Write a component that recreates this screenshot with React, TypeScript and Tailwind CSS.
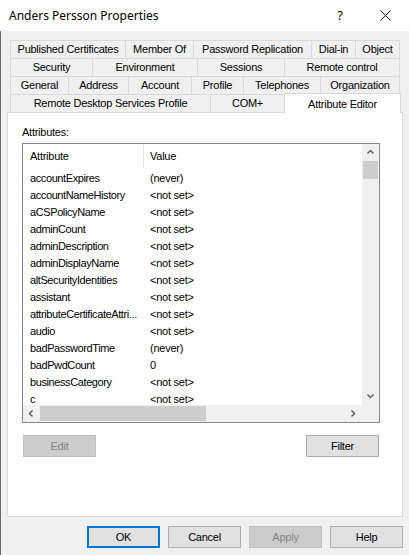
import React from "react";

const tabRows: { label: string; w: number }[][] = [
  [
    { label: "Published Certificates", w: 115 },
    { label: "Member Of", w: 68 },
    { label: "Password Replication", w: 118 },
    { label: "Dial-in", w: 44 },
    { label: "Object", w: 45 },
  ],
  [
    { label: "Security", w: 82 },
    { label: "Environment", w: 105 },
    { label: "Sessions", w: 87 },
    { label: "Remote control", w: 116 },
  ],
  [
    { label: "General", w: 58 },
    { label: "Address", w: 60 },
    { label: "Account", w: 63 },
    { label: "Profile", w: 52 },
    { label: "Telephones", w: 77 },
    { label: "Organization", w: 80 },
  ],
];

const rows = [
  ["accountExpires", "(never)"],
  ["accountNameHistory", "<not set>"],
  ["aCSPolicyName", "<not set>"],
  ["adminCount", "<not set>"],
  ["adminDescription", "<not set>"],
  ["adminDisplayName", "<not set>"],
  ["altSecurityIdentities", "<not set>"],
  ["assistant", "<not set>"],
  ["attributeCertificateAttri...", "<not set>"],
  ["audio", "<not set>"],
  ["badPasswordTime", "(never)"],
  ["badPwdCount", "0"],
  ["businessCategory", "<not set>"],
  ["c", "<not set>"],
];

function Chevron({ dir }: { dir: "up" | "down" | "left" | "right" }) {
  const d = {
    up: "M1.5 5.5 L4.5 2.5 L7.5 5.5",
    down: "M1.5 2.5 L4.5 5.5 L7.5 2.5",
    left: "M5.5 1.5 L2.5 4.5 L5.5 7.5",
    right: "M2.5 1.5 L5.5 4.5 L2.5 7.5",
  }[dir];
  return (
    <svg width="9" height="9" viewBox="0 0 9 9">
      <path d={d} fill="none" stroke="#606060" strokeWidth="1.5" />
    </svg>
  );
}

function Btn({ label, disabled, focus }: { label: string; disabled?: boolean; focus?: boolean }) {
  if (disabled)
    return (
      <div className="w-[73px] h-[22px] flex items-center justify-center bg-[#cccccc] border border-[#bfbfbf] text-[#838383]">
        {label}
      </div>
    );
  return (
    <div
      className={
        focus
          ? "w-[73px] h-[22px] flex items-center justify-center bg-[#e1e1e1] border-2 border-[#0078d7] text-black"
          : "w-[73px] h-[22px] flex items-center justify-center bg-[#e1e1e1] border border-[#adadad] text-black"
      }
    >
      {label}
    </div>
  );
}

export default function App() {
  return (
    <div className="w-[409px] h-[555px] bg-[#f0f0f0] flex flex-col overflow-hidden font-['Liberation_Sans',Arial,sans-serif] text-[11px] tracking-[-0.25px] text-black">
      {/* Title bar */}
      <div className="h-[31px] bg-white flex items-center shrink-0 font-['Noto_Sans',sans-serif] text-[12px] tracking-normal">
        <span className="pl-[9px] flex-1">Anders Persson Properties</span>
        <span className="w-[20px] text-center text-[13px] mr-[30px]">?</span>
        <svg width="11" height="11" viewBox="0 0 11 11" className="mr-[18px]">
          <path d="M0.5 0.5 L10.5 10.5 M10.5 0.5 L0.5 10.5" stroke="#111" strokeWidth="1" />
        </svg>
      </div>

      <div className="flex-1 flex flex-col border-l border-[#6a6a6a]">
        {/* Tabs */}
        <div className="mt-[9px] pl-[9px] flex flex-col">
          {tabRows.map((row, i) => (
            <div key={i} className="flex h-[18px]">
              {row.map((t, j) => (
                <div
                  key={t.label}
                  style={{ width: t.w }}
                  className={
                    j === row.length - 1
                      ? "h-full flex items-center justify-center border-l border-t border-r border-[#d9d9d9] bg-[#f0f0f0]"
                      : "h-full flex items-center justify-center border-l border-t border-[#d9d9d9] bg-[#f0f0f0]"
                  }
                >
                  {t.label}
                </div>
              ))}
            </div>
          ))}
          <div className="flex h-[18px] items-end">
            <div className="w-[200px] h-[18px] flex items-center justify-center border-l border-t border-[#d9d9d9]">
              Remote Desktop Services Profile
            </div>
            <div className="w-[74px] h-[18px] flex items-center justify-center border-l border-t border-[#d9d9d9]">
              COM+
            </div>
            <div className="w-[117px] h-[20px] -mb-px relative z-10 bg-white flex items-start pt-[2px] justify-center border-l border-t border-r border-[#d9d9d9]">
              Attribute Editor
            </div>
          </div>
        </div>

        {/* Panel */}
        <div className="ml-[6px] w-[396px] h-[405px] bg-white border border-[#d9d9d9] flex flex-col">
          <div className="pl-[14px] pt-[11px] h-[30px]">Attributes:</div>

          {/* List box */}
          <div className="ml-[14px] w-[358px] h-[280px] border border-[#828790] flex flex-col">
            <div className="flex flex-1 min-h-0">
              <div className="flex-1 flex flex-col overflow-hidden">
                <div className="h-[25px] flex items-center shrink-0">
                  <div className="w-[121px] pl-[7px] h-[23px] flex items-center border-r border-[#e5e5e5]">Attribute</div>
                  <div className="pl-[6px]">Value</div>
                </div>
                {rows.map(([a, v]) => (
                  <div key={a} className="h-[17px] pt-px flex items-center shrink-0">
                    <div className="w-[121px] pl-[7px] whitespace-nowrap tracking-[-0.4px]">{a}</div>
                    <div className="pl-[6px]">{v}</div>
                  </div>
                ))}
              </div>
              <div className="w-[17px] bg-[#f0f0f0] flex flex-col">
                <div className="h-[17px] flex items-center justify-center">
                  <Chevron dir="up" />
                </div>
                <div className="h-[18px] mx-px bg-[#cdcdcd]" />
                <div className="flex-1" />
                <div className="h-[17px] flex items-center justify-center">
                  <Chevron dir="down" />
                </div>
              </div>
            </div>
            <div className="h-[17px] flex bg-[#f0f0f0] shrink-0">
              <div className="w-[17px] flex items-center justify-center">
                <Chevron dir="left" />
              </div>
              <div className="w-[166px] my-px bg-[#cdcdcd]" />
              <div className="flex-1" />
              <div className="w-[17px] flex items-center justify-center">
                <Chevron dir="right" />
              </div>
              <div className="w-[17px]" />
            </div>
          </div>

          <div className="mt-[12px] ml-[15px] mr-[23px] flex justify-between">
            <Btn label="Edit" disabled />
            <Btn label="Filter" />
          </div>
        </div>

        {/* Dialog buttons */}
        <div className="mt-[9px] pl-[86px] flex gap-[8px]">
          <Btn label="OK" focus />
          <Btn label="Cancel" />
          <Btn label="Apply" disabled />
          <Btn label="Help" />
        </div>
      </div>
    </div>
  );
}
